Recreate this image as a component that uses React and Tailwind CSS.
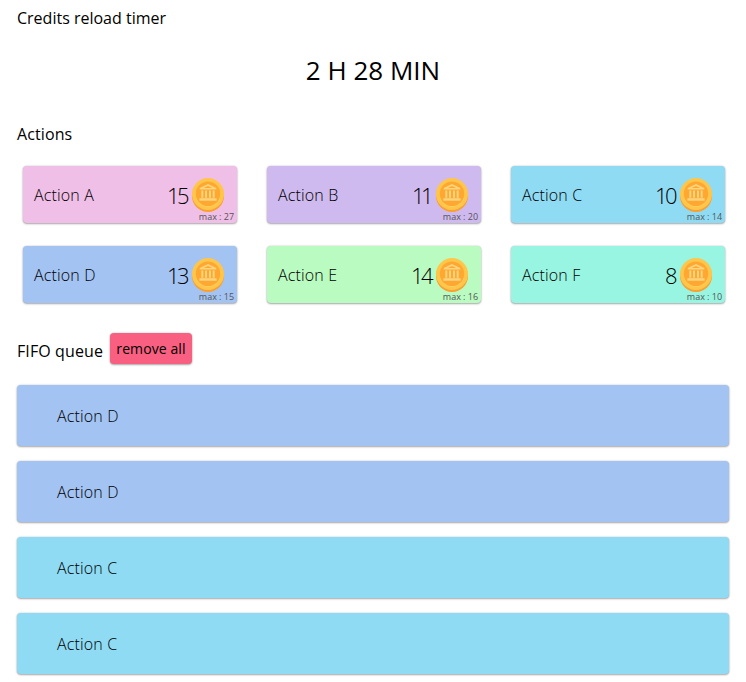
const actions = [
  { name: "Action A", credits: 15, max: 27, color: "bg-[#f0bfe7]" },
  { name: "Action B", credits: 11, max: 20, color: "bg-[#cfbaef]", tracking: "tracking-[-3.6px] pr-px" },
  { name: "Action C", credits: 10, max: 14, color: "bg-[#8fdbf4]" },
  { name: "Action D", credits: 13, max: 15, color: "bg-[#a3c3f3]" },
  { name: "Action E", credits: 14, max: 16, color: "bg-[#bafbc1]" },
  { name: "Action F", credits: 8, max: 10, color: "bg-[#98f5e1]" },
];

const queue = [
  { name: "Action D", color: "bg-[#a3c3f3]" },
  { name: "Action D", color: "bg-[#a3c3f3]" },
  { name: "Action C", color: "bg-[#8fdbf4]" },
  { name: "Action C", color: "bg-[#8fdbf4]" },
];

const shadow = "shadow-[0_0_2px_rgba(0,0,0,0.22),0_1px_2px_rgba(0,0,0,0.3)]";

function Coin() {
  return (
    <svg className="h-[34px] w-8 shrink-0" viewBox="0 0 32 34">
      <circle cx="16" cy="18" r="16" fill="#fa9f30" />
      <circle cx="16" cy="16" r="16" fill="#ffc64a" />
      <circle cx="16" cy="16.4" r="12.5" fill="#ffcf62" />
      <circle cx="16" cy="15.8" r="12.3" fill="#fea832" />
      <g fill="#ffd47c">
        <path fillRule="evenodd" d="M16 6 24.3 10v1.6H7.7V10L16 6Zm0 1.9-4.3 2.1h8.6L16 7.9Z" />
        <path d="M9.3 12.6h2v7.2h-2zM13 12.6h2v7.2h-2zM17 12.6h2v7.2h-2zM20.7 12.6h2v7.2h-2zM7.4 20.3h17.2v2.5H7.4z" />
      </g>
    </svg>
  );
}

function ActionCard({ action }) {
  return (
    <div className={`relative flex h-[57px] items-center rounded-[4px] pl-[11px] pr-[13px] ${shadow} ${action.color}`}>
      <span className="text-base font-light tracking-[0.15px]">{action.name}</span>
      <span className={`ml-auto mr-[5px] pt-px text-[22px] font-light ${action.tracking ?? "tracking-[-2.6px]"}`}>{action.credits}</span>
      <Coin />
      <span className="absolute right-[3px] bottom-0 text-[9px] leading-3 tracking-[-0.03px] text-[#555]">max : {action.max}</span>
    </div>
  );
}

export default function App() {
  return (
    <main className="h-[682px] overflow-hidden bg-white px-[17px] pt-1.5 font-['Open_Sans','Noto_Sans',sans-serif] text-black">
      <h2 className="text-base leading-6">Credits reload timer</h2>
      <div className="mt-[22px] text-center text-[26px] leading-9">2 H 28 MIN</div>
      <h2 className="mt-[34px] text-base leading-6 tracking-[0.1px]">Actions</h2>
      <section className="mx-[6px] mt-5 grid w-[702px] grid-cols-3 gap-x-[30px] gap-y-[23px]">
        {actions.map((action) => (
          <ActionCard key={action.name} action={action} />
        ))}
      </section>
      <div className="mt-[30px] flex items-center gap-[7px]">
        <h2 className="pt-1 text-base leading-6 tracking-[0.1px]">FIFO queue</h2>
        <button className={`h-[31px] w-[82px] rounded-[4px] bg-[#f95f80] pt-px text-sm tracking-[0.1px] ${shadow}`}>remove all</button>
      </div>
      <section className="mt-[21px] flex flex-col gap-[15px]">
        {queue.map((item, index) => (
          <div key={index} className={`flex h-[61px] items-center rounded-[4px] pl-10 text-base font-light tracking-[0.15px] ${shadow} ${item.color}`}>
            {item.name}
          </div>
        ))}
      </section>
    </main>
  );
}
